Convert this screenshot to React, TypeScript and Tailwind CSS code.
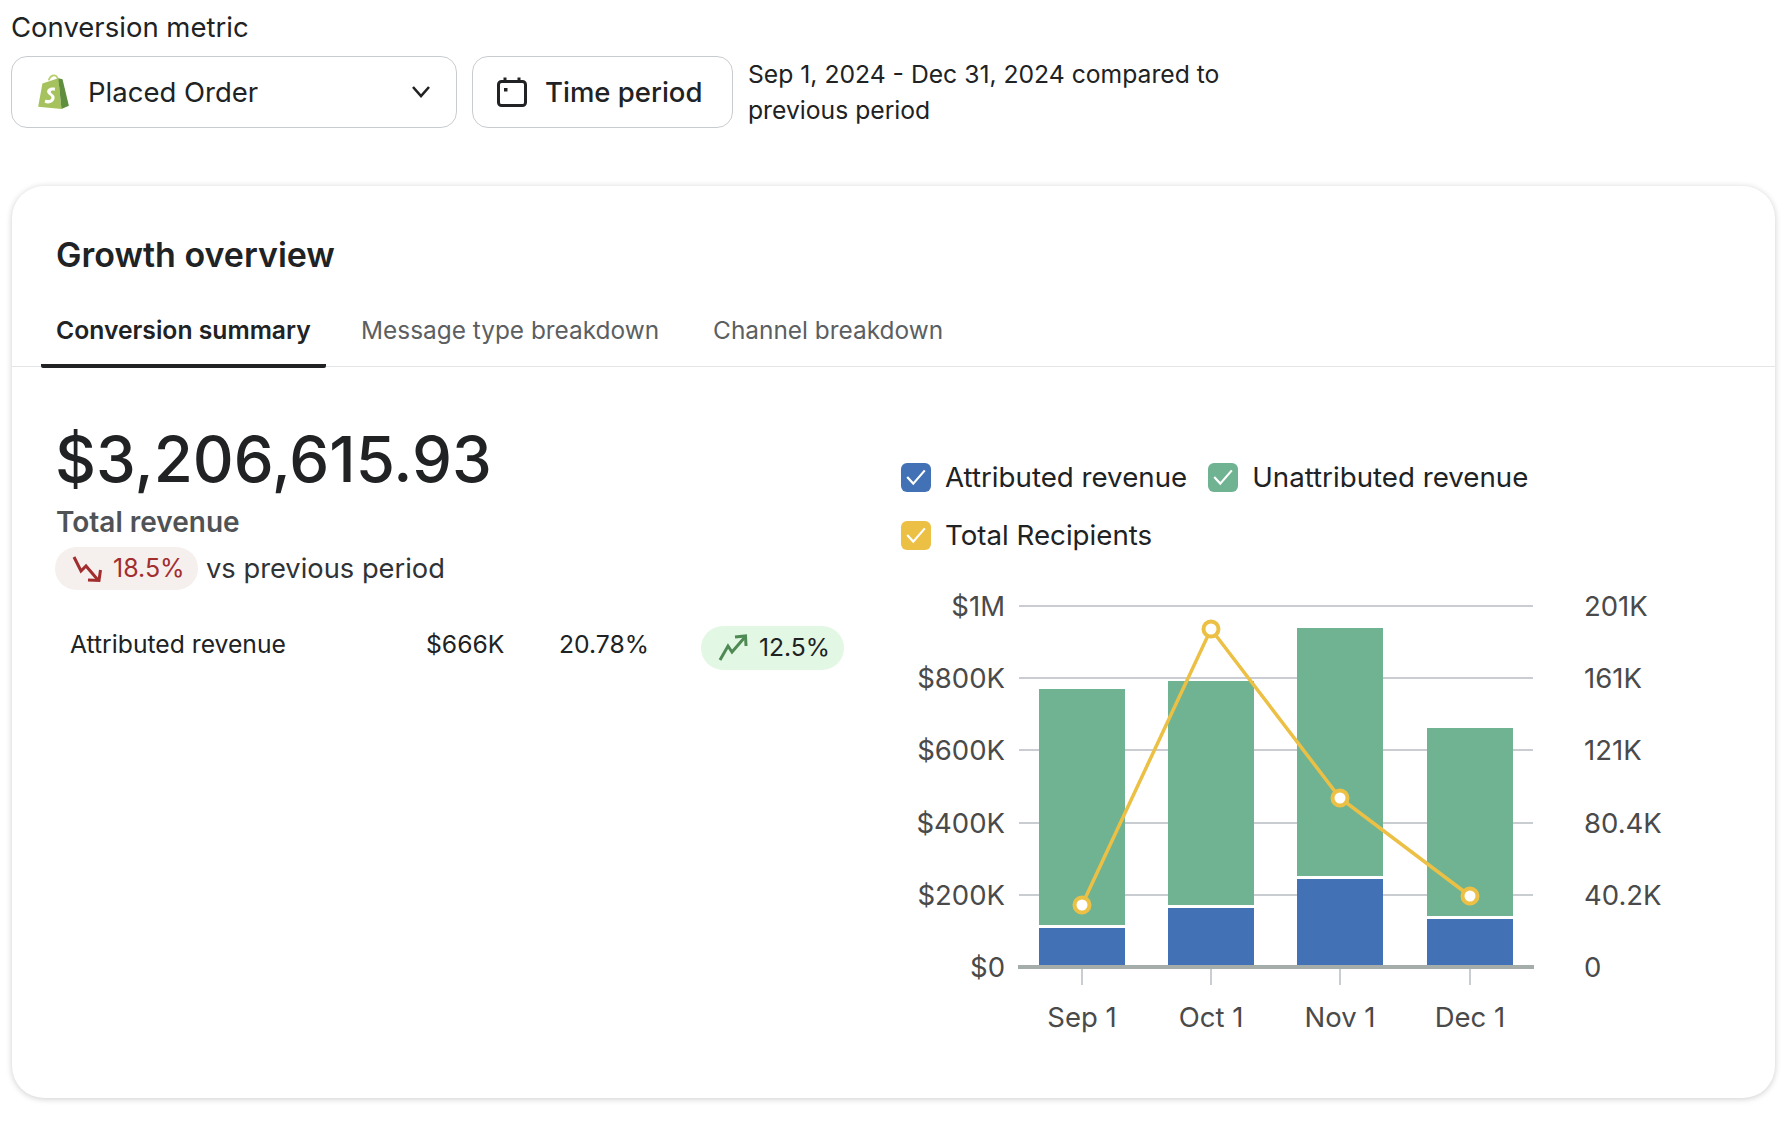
import React from 'react';

const font = { fontFamily: 'Inter, "Liberation Sans", sans-serif' };

const gridLines = [
    { y: 606, left: '$1M', right: '201K' },
    { y: 678, left: '$800K', right: '161K' },
    { y: 750, left: '$600K', right: '121K' },
    { y: 823, left: '$400K', right: '80.4K' },
    { y: 895, left: '$200K', right: '40.2K' },
];

const bars = [
    { x: 1039, top: 689, mid: 925, blue: 928, label: 'Sep 1', point: 905 },
    { x: 1168, top: 681, mid: 905, blue: 908, label: 'Oct 1', point: 629 },
    { x: 1297, top: 628, mid: 876, blue: 879, label: 'Nov 1', point: 798 },
    { x: 1427, top: 728, mid: 916, blue: 919, label: 'Dec 1', point: 896 },
];

const ShopifyBag = () => (
    <svg width="34" height="36" viewBox="0 0 32 34">
        <path d="M12 6 C13 1 18 0 20 3 C21 5 21 7 21 9" fill="none" stroke="#b8cf6a" strokeWidth="1.6" />
        <path d="M2 31 L6 9 L21 4 L24 33 Z" fill="#a5c25f" />
        <path d="M21 4 L25 5 L31 30 L24 33 Z" fill="#5e8e3e" />
        <path d="M18 13 C14 12 10 14 10.5 17 C11 20 15 20 14.5 23 C14 25 11 25 9 24 L8 27 C12 29 17 27 17.5 23 C18 19 14 19 14 17 C14 15.5 16 15.5 17.5 16 Z" fill="#fff" />
    </svg>
);

const CalendarIcon = () => (
    <svg width="32" height="32" viewBox="0 0 32 32" fill="none" stroke="#202223" strokeWidth="3">
        <rect x="2.5" y="5.5" width="27" height="24" rx="3" />
        <path d="M9 1.5 V7 M23 1.5 V7" />
        <rect x="8" y="12" width="3.5" height="3.5" fill="#202223" stroke="none" />
    </svg>
);

const TrendDown = () => (
    <svg width="32" height="28" viewBox="0 0 32 28" fill="none" stroke="#a12d2f" strokeWidth="3">
        <path d="M3 2 L10 16 L15 11 L27 25" />
        <path d="M17 25 L28 25.5 L29.5 15" />
    </svg>
);

const TrendUp = () => (
    <svg width="30" height="28" viewBox="0 0 30 28" fill="none" stroke="#4f8a55" strokeWidth="3">
        <path d="M2 26 L10 12 L14 18 L27 3" />
        <path d="M17 3 L27.5 2 L28 12" />
    </svg>
);

const LegendItem = ({ color, label }: { color: string; label: string }) => (
    <div className="flex items-center gap-[14px]">
        <span className={`flex h-[29px] w-[30px] items-center justify-center rounded-[6px] ${color}`}>
            <svg width="22" height="18" viewBox="0 0 20 16" fill="none" stroke="#fff" strokeWidth="2">
                <path d="M2 8 L7.5 14 L18 2" />
            </svg>
        </span>
        <span>{label}</span>
    </div>
);

const Chart = () => (
    <svg width="620" height="440" viewBox="960 590 620 440" className="overflow-visible" style={{ fontSize: 27.5 }}>
        {gridLines.map((g) => (
            <g key={g.y}>
                <line x1="1019" x2="1533" y1={g.y} y2={g.y} stroke="#c9ccd1" strokeWidth="2" />
                <text x="1005" y={g.y + 10} textAnchor="end" fill="#4a4a4a">{g.left}</text>
                <text x="1584" y={g.y + 10} fill="#4a4a4a">{g.right}</text>
            </g>
        ))}
        <text x="1005" y="977" textAnchor="end" fill="#4a4a4a">$0</text>
        <text x="1584" y="977" fill="#4a4a4a">0</text>
        {bars.map((b) => (
            <g key={b.label}>
                <rect x={b.x} y={b.top} width="86" height={b.mid - b.top} fill="#6fb392" />
                <rect x={b.x} y={b.blue} width="86" height={966 - b.blue} fill="#4371b5" />
                <line x1={b.x + 43} x2={b.x + 43} y1="968" y2="985" stroke="#c9ccd1" strokeWidth="2" />
                <text x={b.x + 43} y="1027" textAnchor="middle" fill="#4a4a4a">{b.label}</text>
            </g>
        ))}
        <line x1="1018" x2="1534" y1="967" y2="967" stroke="#a5adab" strokeWidth="4" />
        <polyline
            points={bars.map((b) => `${b.x + 43},${b.point}`).join(' ')}
            fill="none"
            stroke="#ecc044"
            strokeWidth="3.5"
        />
        {bars.map((b) => (
            <circle key={b.x} cx={b.x + 43} cy={b.point} r="7.5" fill="#fff" stroke="#ecc044" strokeWidth="4" />
        ))}
    </svg>
);

const App = () => {
    return (
        <div style={font} className="h-[1124px] w-[1792px] overflow-hidden bg-white pl-[11px] pr-[17px] text-[#202223]">
            <div className="pt-[9px] text-[27.5px] leading-[36px]">Conversion metric</div>

            <div className="mt-[11px] flex items-start">
                <div className="flex h-[72px] w-[446px] items-center rounded-[16px] border border-[#c9cccf] pl-[24px] pr-[25px] text-[27.5px]">
                    <ShopifyBag />
                    <span className="ml-[18px] mt-px flex-1">Placed Order</span>
                    <svg width="20" height="14" viewBox="0 0 20 14" fill="none" stroke="#202223" strokeWidth="2.6">
                        <path d="M2 2 L10 11 L18 2" />
                    </svg>
                </div>
                <div className="ml-[15px] flex h-[72px] w-[261px] items-center rounded-[16px] border border-[#c9cccf] pl-[23px] text-[27.5px] font-medium">
                    <CalendarIcon />
                    <span className="ml-[17px] mt-px">Time period</span>
                </div>
                <div className="ml-[15px] w-[490px] text-[24.7px] leading-[36px]">
                    Sep 1, 2024 - Dec 31, 2024 compared to previous period
                </div>
            </div>

            <div className="ml-px mt-[58px] h-[912px] rounded-[32px] bg-white shadow-[0_1px_6px_rgba(0,0,0,0.2)]">
                <div className="pl-[44px] pt-[46px] text-[34px] font-semibold leading-[46px]">Growth overview</div>

                <div className="mt-[31px] flex h-[58px] border-b border-[#e4e5e7] pl-[29px] text-[24.4px]">
                    <div className="-mb-px h-[59px] w-[285px] rounded-[2px] border-b-[4px] border-[#202223] pl-[15px] pt-[3px] text-[24.7px] font-semibold">
                        Conversion summary
                    </div>
                    <div className="ml-[35px] pt-[3px] text-[#5c5f62]">Message type breakdown</div>
                    <div className="ml-[54px] pt-[3px] text-[#5c5f62]">Channel breakdown</div>
                </div>

                <div className="flex">
                    <div className="w-[889px] shrink-0 pl-[44px]">
                        <div className="-ml-px mt-[52px] text-[63.5px] font-medium leading-[80px]">$3,206,615.93</div>
                        <div className="mt-[5px] text-[28px] font-semibold leading-[36px] text-[#505356]">Total revenue</div>
                        <div className="mt-[7px] flex items-center">
                            <span className="-ml-px flex h-[43px] w-[143px] items-center rounded-full bg-[#f5efed] pl-[16px] text-[25px] text-[#a12d2f]">
                                <TrendDown />
                                <span className="ml-[10px]">18.5%</span>
                            </span>
                            <span className="ml-[8px] mt-[2px] text-[27.3px] text-[#303336]">vs previous period</span>
                        </div>
                        <div className="mt-[35px] flex h-[46px] items-start pl-[14px] text-[24.7px]">
                            <span className="mt-[1px] w-[356px]">Attributed revenue</span>
                            <span className="mt-[1px] w-[133px]">$666K</span>
                            <span className="mt-[1px] w-[142px]">20.78%</span>
                            <span className="mt-px flex h-[44px] w-[143px] items-center rounded-full bg-[#e2f7e4] pl-[17px]">
                                <TrendUp />
                                <span className="ml-[11px]">12.5%</span>
                            </span>
                        </div>
                    </div>

                    <div className="flex-1">
                        <div className="mt-[92px] text-[27.7px] leading-[36px]">
                            <div className="flex gap-[21px]">
                                <LegendItem color="bg-[#4371b5]" label="Attributed revenue" />
                                <LegendItem color="bg-[#6fb392]" label="Unattributed revenue" />
                            </div>
                            <div className="mt-[22px]">
                                <LegendItem color="bg-[#ecc044]" label="Total Recipients" />
                            </div>
                        </div>
                        <div className="ml-[59px] mt-[37px]">
                            <Chart />
                        </div>
                    </div>
                </div>
            </div>
        </div>
    );
};

export default App;
